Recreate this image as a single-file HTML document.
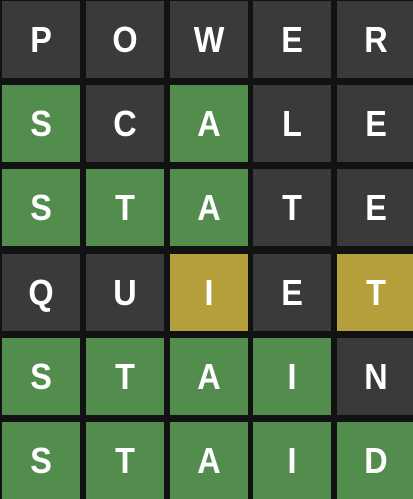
<!DOCTYPE html><html><head><style>
body{margin:0;width:413px;height:498px;background:#121213;overflow:hidden;position:relative;font-family:"Liberation Sans",Arial,sans-serif}
.t{position:absolute;width:78px;height:77px;color:#fff;font-weight:bold;font-size:36px;line-height:77px;text-align:center;transform-origin:center}
.t span{display:inline-block;transform:scaleX(0.9)}
.d{background:#3a3a3c}.g{background:#538d4e}.y{background:#b59f3b}
</style></head><body>
<script>
const rows=[["POWER","ddddd"],["SCALE","gdgdd"],["STATE","gggdd"],["QUIET","ddydy"],["STAIN","ggggd"],["STAID","ggggg"]];
let h="";rows.forEach((r,i)=>{for(let j=0;j<5;j++){h+=`<div class="t ${r[1][j]}" style="left:${2+j*83.8}px;top:${1+i*84.2}px"><span>${r[0][j]}</span></div>`}});
document.write(h);
</script>
</body></html>
